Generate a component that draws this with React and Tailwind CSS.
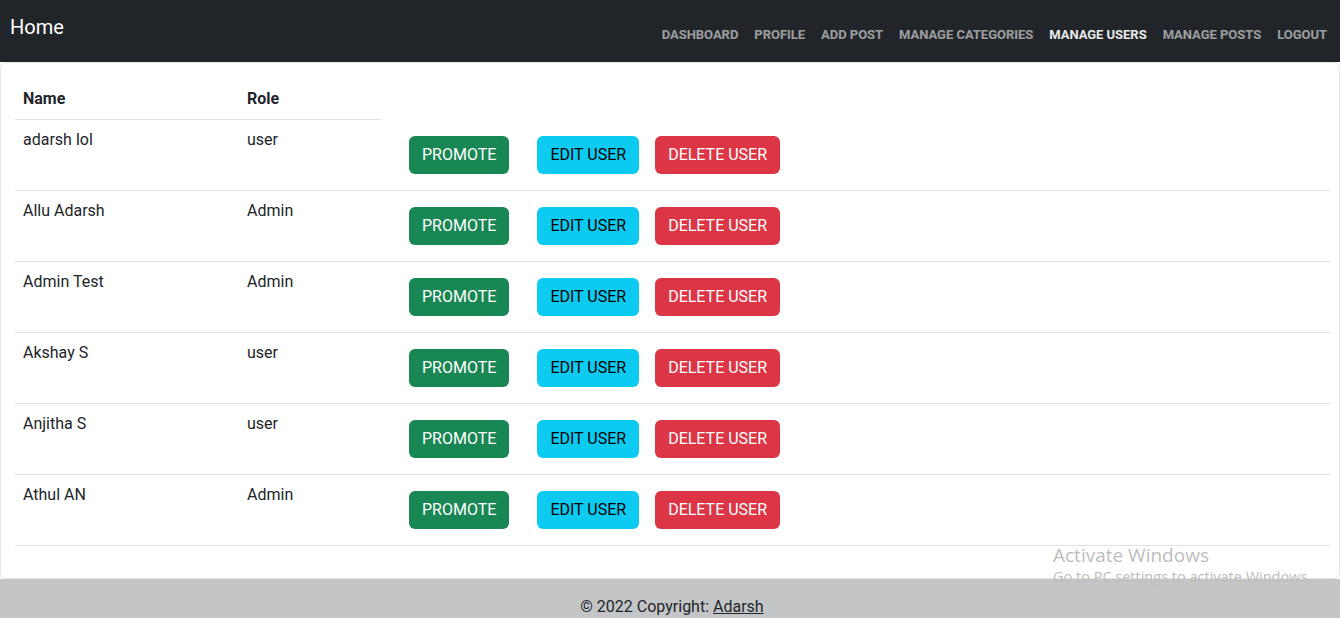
import React from "react";

const users = [
  { name: "adarsh lol", role: "user" },
  { name: "Allu Adarsh", role: "Admin" },
  { name: "Admin Test", role: "Admin" },
  { name: "Akshay S", role: "user" },
  { name: "Anjitha S", role: "user" },
  { name: "Athul AN", role: "Admin" },
];

const links = ["Dashboard", "Profile", "Add Post", "Manage Categories", "Manage Users", "Manage Posts", "Logout"];

export default function App() {
  return (
    <div className="min-h-screen bg-white text-[#212529] font-['Roboto',sans-serif] overflow-hidden">
      <nav className="h-[62px] bg-[#212529] flex items-start justify-between pl-[10px] pr-[5px]">
        <a className="text-white text-[20px] leading-[30px] pt-[12px]">Home</a>
        <ul className="flex pt-[25px]">
          {links.map((l) => (
            <li
              key={l}
              className={`px-2 text-[13px] leading-5 font-bold uppercase tracking-[-0.03px] ${
                l === "Manage Users" ? "text-white/90" : "text-white/55"
              }`}
            >
              {l}
            </li>
          ))}
        </ul>
      </nav>

      <div className="bg-white rounded-md border border-black/10 pl-[14px] pr-[9px] pt-[16px] pb-[32px]">
        <table className="w-full text-[16px] leading-6 border-collapse">
          <thead>
            <tr>
              <th className="text-left font-bold p-2 w-[224px] border-b border-[#dee2e6]">Name</th>
              <th className="text-left font-bold p-2 w-[142px] border-b border-[#dee2e6]">Role</th>
              <th className="p-2"></th>
            </tr>
          </thead>
          <tbody>
            {users.map((u) => (
              <tr key={u.name} className="border-b border-[#dee2e6]">
                <td className="p-2 align-top">{u.name}</td>
                <td className="p-2 align-top">{u.role}</td>
                <td className="p-2 align-top">
                  <div className="flex py-2">
                    <button className="ml-5 h-[38px] px-[13px] rounded-md bg-[#198754] text-white uppercase">
                      Promote
                    </button>
                    <button className="ml-7 h-[38px] px-[13px] rounded-md bg-[#0dcaf0] text-black uppercase">
                      Edit User
                    </button>
                    <button className="ml-4 h-[38px] px-[13px] rounded-md bg-[#dc3545] text-white uppercase">
                      Delete User
                    </button>
                  </div>
                </td>
              </tr>
            ))}
          </tbody>
        </table>
      </div>

      <footer className="bg-[#c4c5c7] text-center py-4 pl-1 text-[16px] leading-6 text-[#212529]">
        © 2022 Copyright: <a className="underline">Adarsh</a>
      </footer>

      <div className="absolute left-[1053px] top-[542px] font-['Open_Sans',sans-serif] text-[#bdbdbd] pointer-events-none">
        <div className="text-[19px] leading-[26px]">Activate Windows</div>
        <div className="text-[14.5px] leading-[18px]">Go to PC settings to activate Windows.</div>
      </div>
    </div>
  );
}
